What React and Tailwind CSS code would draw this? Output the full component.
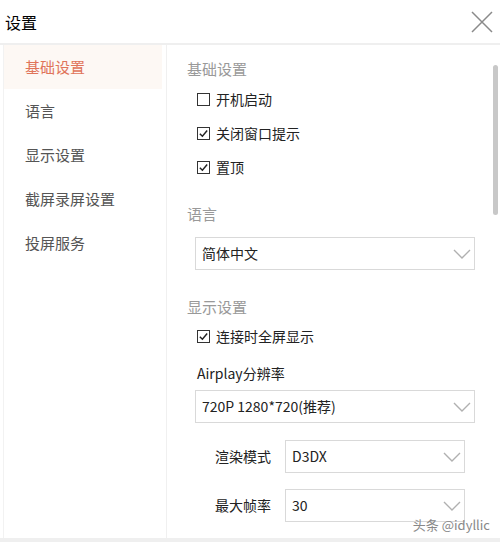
import { ChevronDown } from "lucide-react";

const menu = ["基础设置", "语言", "显示设置", "截屏录屏设置", "投屏服务"];

function Check({ checked, label }) {
  return (
    <div className="flex items-center h-[34px] pl-[10px]">
      <span className="w-[13px] h-[13px] border border-[#333] flex items-center justify-center bg-white">
        {checked && (
          <svg viewBox="0 0 12 12" className="w-[11px] h-[11px]">
            <path d="M2 6.2 L4.8 9 L10 2.8" fill="none" stroke="#222" strokeWidth="1.6" />
          </svg>
        )}
      </span>
      <span className="ml-[6px] text-[14px] text-[#222]">{label}</span>
    </div>
  );
}

function Select({ value, className }) {
  return (
    <div className={`h-[33px] border border-[#d9d9d9] flex items-center justify-between pl-[6px] pr-[2px] bg-white ${className}`}>
      <span className="text-[14px] text-[#222]">{value}</span>
      <svg viewBox="0 0 20 12" className="w-[20px] h-[12px]">
        <path d="M2 2 L10 10 L18 2" fill="none" stroke="#b0b0b0" strokeWidth="1.4" />
      </svg>
    </div>
  );
}

export default function App() {
  return (
    <div
      className="w-[500px] h-[542px] bg-white flex flex-col overflow-hidden relative"
      style={{ fontFamily: '"Noto Sans CJK SC", "Noto Sans", sans-serif' }}
    >
      <div className="h-[45px] flex items-center justify-between pl-[5px] pr-[6px] border-b-2 border-[#efefef] shrink-0">
        <span className="text-[16px] text-black">设置</span>
        <svg viewBox="0 0 24 24" className="w-[24px] h-[24px]">
          <path d="M2 2 L22 22 M22 2 L2 22" stroke="#8a8a8a" strokeWidth="1.5" fill="none" />
        </svg>
      </div>
      <div className="flex flex-1 min-h-0 border-b-4 border-[#efefef]">
        <aside className="w-[167px] shrink-0 pl-[3px] pr-[4px] border-r border-[#f0f0f0]">
          <div className="h-full border-l border-[#f2f2f2] flex flex-col">
            {menu.map((m, i) => (
              <div
                key={m}
                className={`h-[44px] flex items-center pl-[21px] text-[15px] ${
                  i === 0 ? "bg-[#fdf8f4] text-[#e0745a]" : "text-[#555]"
                }`}
              >
                {m}
              </div>
            ))}
          </div>
        </aside>
        <main className="flex-1 flex min-w-0">
          <div className="flex-1 pl-[20px] pr-[14px] pt-[12px]">
            <div className="text-[15px] text-[#999] h-[24px] leading-[24px]">基础设置</div>
            <div className="mt-[1px]">
              <Check checked={false} label="开机启动" />
              <Check checked label="关闭窗口提示" />
              <Check checked label="置顶" />
            </div>
            <div className="text-[15px] text-[#999] mt-[18px] h-[24px] leading-[24px]">语言</div>
            <Select value="简体中文" className="mt-[11px] ml-[8px] w-[280px]" />
            <div className="text-[15px] text-[#999] mt-[25px] h-[24px] leading-[24px]">显示设置</div>
            <Check checked label="连接时全屏显示" />
            <div className="text-[14px] text-[#222] ml-[10px] mt-[8px] h-[24px] leading-[24px]">Airplay分辨率</div>
            <Select value="720P 1280*720(推荐)" className="mt-[5px] ml-[8px] w-[280px]" />
            <div className="flex items-center mt-[17px]">
              <span className="w-[98px] text-right pr-[14px] text-[14px] text-[#222]">渲染模式</span>
              <Select value="D3DX" className="w-[180px]" />
            </div>
            <div className="flex items-center mt-[16px]">
              <span className="w-[98px] text-right pr-[14px] text-[14px] text-[#222]">最大帧率</span>
              <Select value="30" className="w-[180px]" />
            </div>
          </div>
          <div className="w-[10px] shrink-0 pt-[20px] flex justify-center">
            <div className="w-[5px] h-[150px] rounded-full bg-[#c8c8c8]" />
          </div>
        </main>
      </div>
      <span className="absolute right-[10px] bottom-[8px] text-[13px] text-[#888]">头条 @idyllic</span>
    </div>
  );
}
